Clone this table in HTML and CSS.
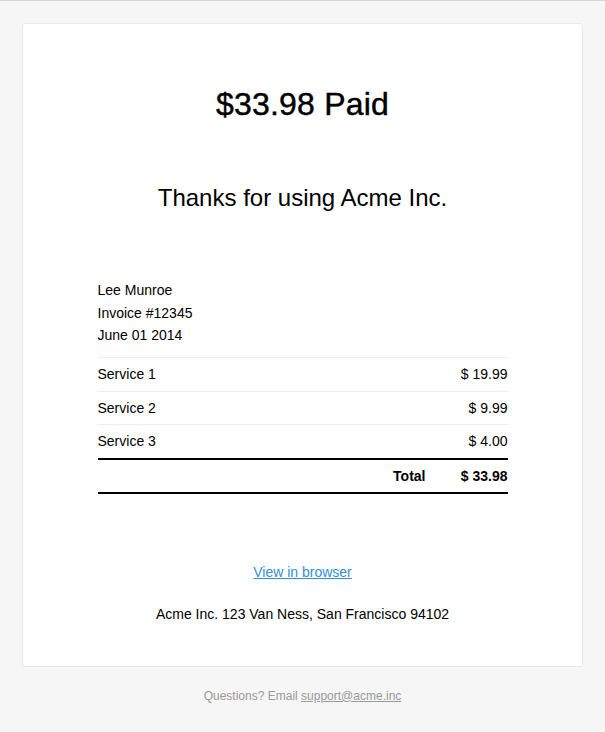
FILE: index.html
```html
<!DOCTYPE html>
<html>
<head>
<meta charset="utf-8">
<link rel="stylesheet" href="styles.css">
</head>
<body>
<div class="page">
  <div class="card">
    <h1 class="title">$33.98 Paid</h1>
    <h2 class="subtitle">Thanks for using Acme Inc.</h2>
    <table class="invoice">
      <tr><td class="info" colspan="2">Lee Munroe<br>Invoice #12345<br>June 01 2014</td></tr>
      <tr class="item"><td>Service 1</td><td class="right">$ 19.99</td></tr>
      <tr class="item"><td>Service 2</td><td class="right">$ 9.99</td></tr>
      <tr class="item last"><td>Service 3</td><td class="right">$ 4.00</td></tr>
      <tr class="total"><td class="right total-label">Total</td><td class="right">$ 33.98</td></tr>
    </table>
    <p class="link-row"><a href="#">View in browser</a></p>
    <p class="address">Acme Inc. 123 Van Ness, San Francisco 94102</p>
  </div>
  <p class="footer">Questions? Email <a href="#">support@acme.inc</a></p>
</div>
</body>
</html>
```
FILE: styles.css
```css
html, body {
  margin: 0;
  padding: 0;
}
body {
  background: #f6f6f6;
  border-top: 1px solid #d4d4d4;
  font-family: "Liberation Sans", Arial, sans-serif;
  font-size: 14px;
  line-height: 1.6;
  color: #000;
  min-height: 731px;
}
.page {
  padding: 22px 22px 0;
}
.card {
  background: #fff;
  border: 1px solid #e9e9e9;
  border-radius: 3px;
  padding: 61px 0 40px;
  text-align: center;
}
.title {
  margin: 0;
  font-size: 32px;
  font-weight: 400;
  -webkit-text-stroke: 0.45px #000;
  letter-spacing: 0.2px;
  line-height: 1.2;
}
.subtitle {
  margin: 61px 0 0;
  font-size: 24px;
  font-weight: 400;
  line-height: 1.2;
}
.invoice {
  width: 410px;
  margin: 66px auto 0;
  border-collapse: collapse;
  text-align: left;
}
.invoice td {
  padding: 5px 0;
  vertical-align: top;
}
.invoice td.info {
  padding: 0 0 11px;
}
.item td {
  border-top: 1px solid #eee;
}
.item.last td {
  border-bottom: 2px solid #000;
}
.total td {
  border-bottom: 2px solid #000;
  font-weight: 700;
}
.total-label {
  width: 80%;
}
.right {
  text-align: right;
}
.link-row {
  margin: 67px 0 0;
}
.link-row a {
  color: #348eda;
}
.address {
  margin: 20px 0 0;
}
.footer {
  margin: 20px 0 0;
  text-align: center;
  font-size: 12px;
  color: #999;
}
.footer a {
  color: #999;
}
```
